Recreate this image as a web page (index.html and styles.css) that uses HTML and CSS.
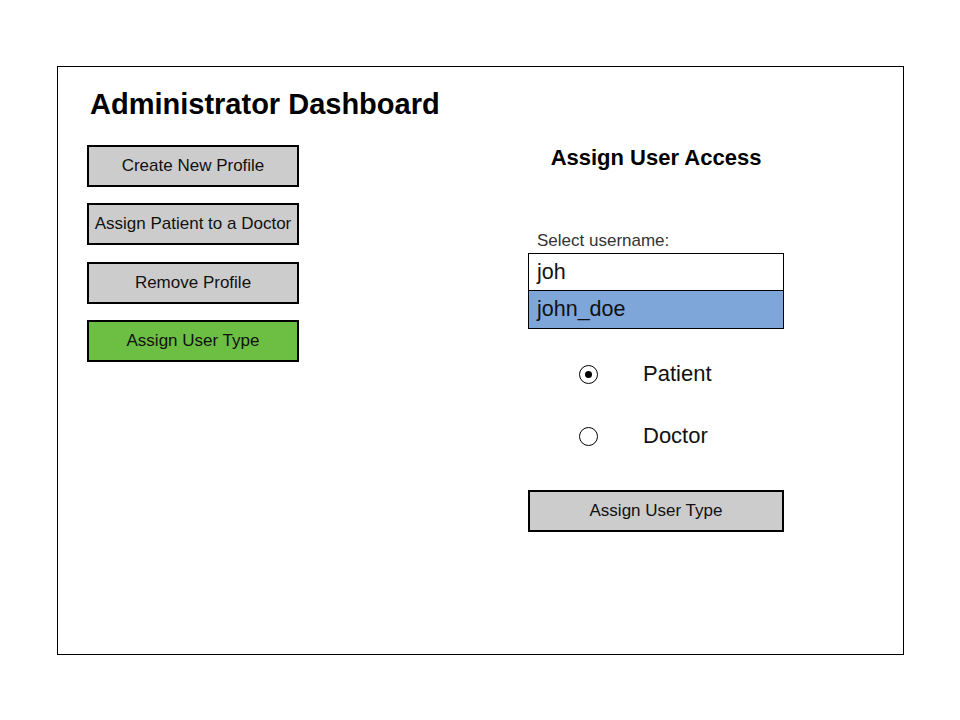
FILE: index.html
```html
<!DOCTYPE html>
<html>
<head>
<meta charset="utf-8">
<link rel="stylesheet" href="styles.css">
</head>
<body>
<div class="frame">
  <div class="left">
    <h1 class="title">Administrator Dashboard</h1>
    <div class="menu">
      <div class="btn">Create New Profile</div>
      <div class="btn">Assign Patient to a Doctor</div>
      <div class="btn">Remove Profile</div>
      <div class="btn active">Assign User Type</div>
    </div>
  </div>
  <div class="right">
    <h2 class="subtitle">Assign User Access</h2>
    <div class="label">Select username:</div>
    <div class="input">joh</div>
    <div class="option">john_doe</div>
    <div class="radios">
      <div class="radio-row"><span class="radio checked"></span><span class="radio-label">Patient</span></div>
      <div class="radio-row"><span class="radio"></span><span class="radio-label">Doctor</span></div>
    </div>
    <div class="btn wide">Assign User Type</div>
  </div>
</div>
</body>
</html>
```
FILE: styles.css
```css
html, body {
  margin: 0;
  padding: 0;
  background: #ffffff;
}
body {
  font-family: "Liberation Sans", Arial, sans-serif;
  color: #111;
}
.frame {
  box-sizing: border-box;
  margin: 66px 0 0 57px;
  width: 847px;
  height: 589px;
  border: 1px solid #000;
  display: flex;
}
.left {
  width: 440px;
  padding: 20px 0 0 29px;
  box-sizing: border-box;
}
.title {
  margin: 0 0 0 3px;
  font-size: 29px;
  line-height: 34px;
  font-weight: bold;
  color: #000;
}
.menu {
  margin-top: 24px;
  display: flex;
  flex-direction: column;
  gap: 16px;
}
.btn {
  box-sizing: border-box;
  width: 212px;
  height: 42px;
  border: 2px solid #000;
  background: #cccccc;
  display: flex;
  align-items: center;
  justify-content: center;
  font-size: 17px;
  color: #111;
}
.menu .btn:nth-child(3) {
  margin-top: 1px;
}
.btn.active {
  background: #6cbf43;
}
.right {
  margin-left: 30px;
  width: 256px;
  padding-top: 78px;
  display: flex;
  flex-direction: column;
}
.subtitle {
  margin: 0;
  text-align: center;
  font-size: 22px;
  line-height: 26px;
  font-weight: bold;
  color: #000;
}
.label {
  margin: 60px 0 0 9px;
  font-size: 17px;
  line-height: 20px;
  color: #333;
}
.input {
  margin-top: 2px;
  box-sizing: border-box;
  height: 38px;
  border: 1px solid #000;
  padding-left: 8px;
  font-size: 21.5px;
  line-height: 36px;
  color: #111;
}
.option {
  box-sizing: border-box;
  height: 38px;
  border: 1px solid #000;
  border-top: none;
  background: #7ea6d9;
  padding-left: 8px;
  font-size: 21.5px;
  line-height: 37px;
  color: #111;
}
.radios {
  margin-top: 33px;
  display: flex;
  flex-direction: column;
  gap: 38px;
}
.radio-row {
  display: flex;
  align-items: center;
  height: 24px;
}
.radio {
  box-sizing: border-box;
  width: 19px;
  height: 19px;
  margin-left: 51px;
  border: 1px solid #000;
  border-radius: 50%;
  background: #fff;
  position: relative;
}
.radio.checked::after {
  content: "";
  position: absolute;
  left: 5px;
  top: 5px;
  width: 7px;
  height: 7px;
  border-radius: 50%;
  background: #000;
}
.radio-label {
  margin-left: 45px;
  font-size: 22px;
  color: #111;
}
.btn.wide {
  width: 256px;
  margin-top: 42px;
  font-size: 17px;
}
```
